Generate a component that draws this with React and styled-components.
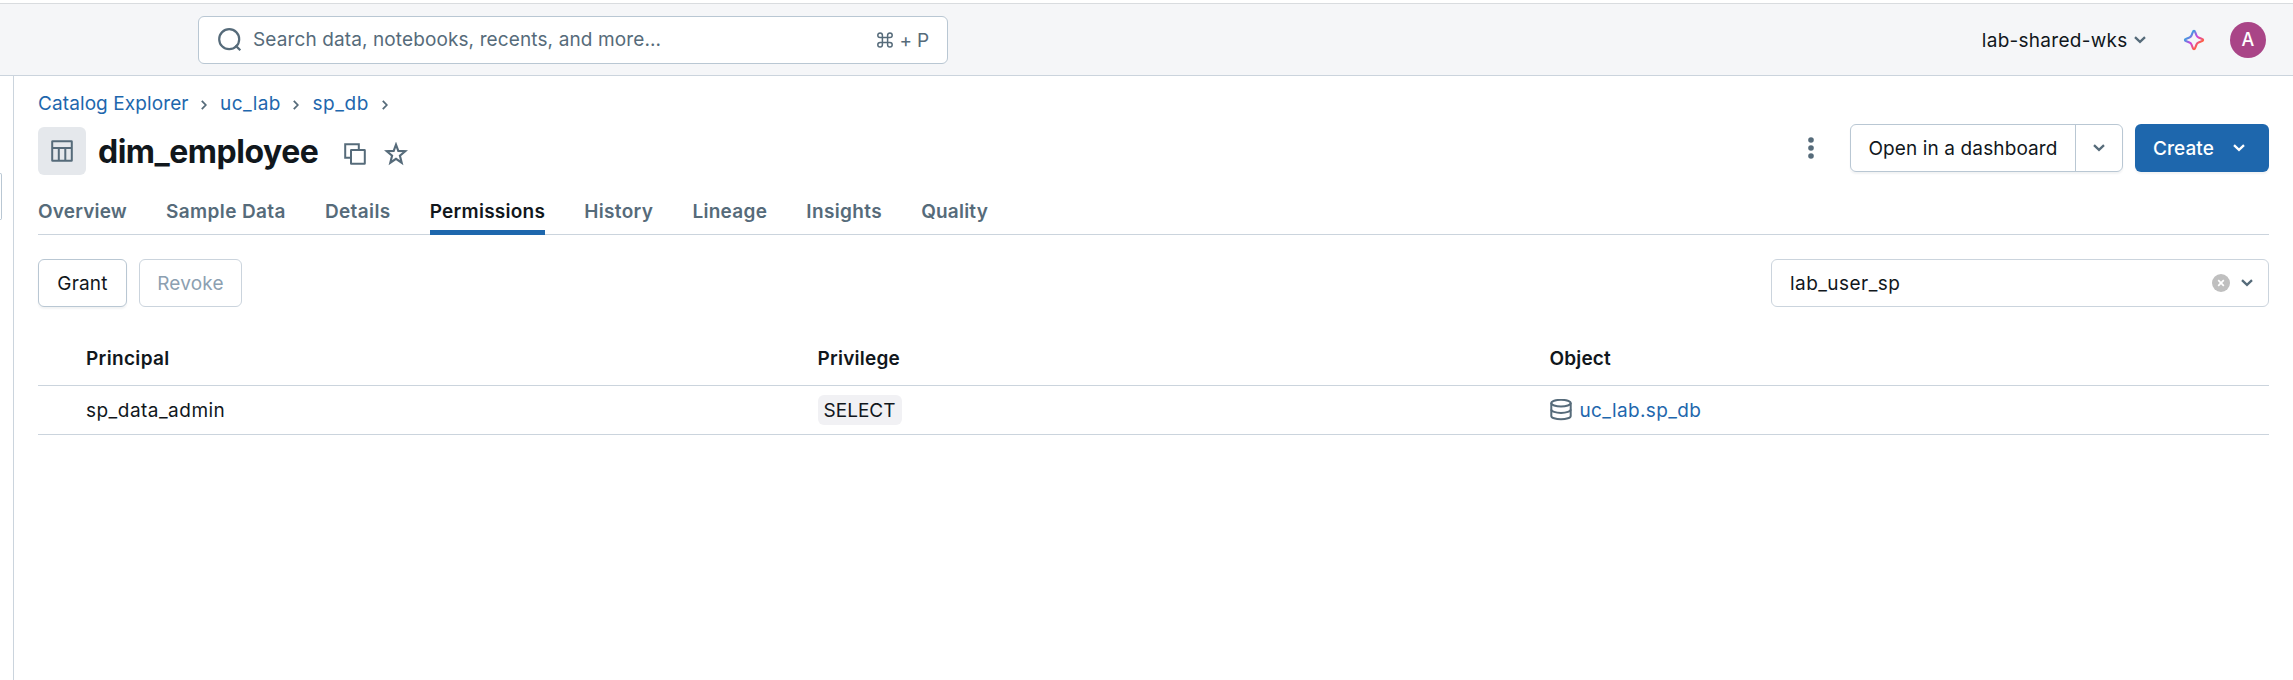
import React from "react";
import styled, { createGlobalStyle } from "styled-components";

const slate = "#566b7a";
const ink = "#11171c";
const blue = "#1e67ad";
const line = "#cbd4dd";
const border = "#b9c7d3";

const GlobalStyle = createGlobalStyle`
  *, *::before, *::after { box-sizing: border-box; }
  html, body, #root { height: 100%; }
  body {
    margin: 0;
    background: #fff;
    color: ${ink};
    font: 400 19px/30px Inter, "Liberation Sans", sans-serif;
    overflow: hidden;
  }
  button { font: inherit; color: inherit; margin: 0; padding: 0; cursor: pointer; }
  svg { display: block; flex: none; }
`;

const Page = styled.div`
  display: flex;
  flex-direction: column;
  height: 100%;
  padding-top: 3px;
`;

const TopBar = styled.header`
  display: flex;
  align-items: center;
  height: 73px;
  flex: none;
  padding: 0 27px 0 198px;
  background: #f5f6f8;
  border-top: 1px solid #d9dcdf;
  border-bottom: 1px solid ${line};
`;

const Label = styled.span`
  display: inline-block;
  padding-top: 2px;
  letter-spacing: ${(p) => p.$track || 0}px;
  white-space: nowrap;
`;

const SearchBox = styled.div`
  display: flex;
  align-items: center;
  width: 750px;
  height: 48px;
  padding: 0 18px 0 19px;
  background: #fff;
  border: 1px solid ${border};
  border-radius: 6px;
  color: ${slate};
`;

const SearchHint = styled(Label)`
  flex: 1;
  margin: 0 0 2px 11px;
`;

const Shortcut = styled.span`
  display: flex;
  align-items: center;
  gap: 7px;
`;

const Workspace = styled.button`
  display: flex;
  align-items: center;
  gap: 6.5px;
  margin-left: auto;
  border: 0;
  background: none;
`;

const AssistantButton = styled.button`
  margin: 0 25px 0 37px;
  border: 0;
  background: none;
`;

const Avatar = styled.div`
  display: grid;
  place-items: center;
  width: 36px;
  height: 36px;
  border-radius: 50%;
  background: #a94587;
  color: #fff;
  font-size: 18px;
  font-weight: 500;
`;

const Body = styled.div`
  display: flex;
  flex: 1;
`;

const Rail = styled.aside`
  width: 14px;
  flex: none;
  padding-top: 97px;
  border-right: 1px solid ${line};
`;

const RailHandle = styled.div`
  width: 2px;
  height: 47px;
  border: 1px solid ${border};
  border-left: 0;
  border-radius: 0 5px 5px 0;
`;

const Main = styled.main`
  flex: 1;
  padding: 12px 24px 0;
`;

const Breadcrumbs = styled.nav`
  display: flex;
  align-items: center;
  height: 30px;
  color: ${blue};
`;

const Separator = styled.span`
  padding: 3px 13px 0 12.5px;
`;

const TitleRow = styled.div`
  display: flex;
  align-items: center;
  height: 54px;
  margin-top: 6px;
`;

const TypeBadge = styled.div`
  display: grid;
  place-items: center;
  width: 48px;
  height: 48px;
  border-radius: 6px;
  background: #e5e8ec;
`;

const Title = styled.h1`
  margin: 0 25.5px 0 12px;
  padding-top: 1px;
  font-size: 32px;
  line-height: 42px;
  font-weight: 650;
  letter-spacing: -0.5px;
`;

const TitleTools = styled.div`
  display: flex;
  align-items: center;
  gap: 18.5px;
  padding-top: 5px;
`;

const Actions = styled.div`
  display: flex;
  align-items: center;
  margin: -6px 0 0 auto;
`;

const SplitButton = styled.div`
  display: flex;
  width: 273px;
  height: 48px;
  margin: 0 12px 0 36px;
  border: 1px solid ${border};
  border-radius: 6px;
  box-shadow: 0 2px 2px rgba(27, 49, 68, 0.06);
`;

const SplitMain = styled.button`
  flex: 1;
  border: 0;
  border-right: 1px solid ${border};
  background: none;
`;

const SplitToggle = styled.button`
  display: grid;
  place-items: center;
  width: 46px;
  border: 0;
  background: none;
`;

const CreateButton = styled.button`
  display: flex;
  align-items: center;
  gap: 19px;
  width: 134px;
  height: 48px;
  padding: 0 0 0 18px;
  border: 0;
  border-radius: 6px;
  background: ${blue};
  color: #fff;
  font-weight: 500;
  box-shadow: 0 2px 2px rgba(27, 49, 68, 0.06);
`;

const Tabs = styled.nav`
  display: flex;
  gap: 39.1px;
  height: 57px;
  border-bottom: 1px solid ${line};
`;

const Tab = styled.a`
  height: 57px;
  padding-top: 19px;
  border-bottom: 5px solid ${(p) => (p.$active ? blue : "transparent")};
  color: ${(p) => (p.$active ? ink : slate)};
  font-weight: 600;
  letter-spacing: ${(p) => p.$track}px;
  white-space: nowrap;
`;

const Toolbar = styled.div`
  display: flex;
  gap: 12px;
  margin-top: 24px;
`;

const Button = styled.button`
  width: ${(p) => p.$width}px;
  height: 48px;
  padding-top: 1px;
  border: 1px solid ${(p) => (p.disabled ? line : border)};
  border-radius: 6px;
  background: #fff;
  color: ${(p) => (p.disabled ? "#8ca0b1" : ink)};
  letter-spacing: 0.19px;
  box-shadow: ${(p) => (p.disabled ? "none" : "0 2px 2px rgba(27, 49, 68, 0.06)")};
`;

const Select = styled.div`
  display: flex;
  align-items: center;
  width: 498px;
  height: 48px;
  margin-left: auto;
  padding: 0 15px 0 18px;
  border: 1px solid ${line};
  border-radius: 6px;
`;

const SelectValue = styled(Label)`
  flex: 1;
`;

const Clear = styled.span`
  margin: 0 11px 0 0;
`;

const Table = styled.div`
  margin-top: 24px;
`;

const Row = styled.div`
  display: grid;
  grid-template-columns: 731.5px 732px 1fr;
  align-items: center;
  height: ${(p) => (p.$head ? 55 : 49)}px;
  padding-left: 48px;
  border-bottom: 1px solid ${line};
  font-weight: ${(p) => (p.$head ? 600 : 400)};
`;

const Tag = styled.span`
  display: block;
  width: 84px;
  height: 30px;
  padding: 1px 0 0 6px;
  border-radius: 6px;
  background: #f1f1f4;
  letter-spacing: 0.02px;
`;

const ObjectLink = styled.a`
  display: flex;
  align-items: center;
  gap: 8px;
  color: ${blue};
`;

function ChevronDown({ color = slate }) {
  return (
    <svg width="12" height="8" viewBox="0 0 12 8" fill="none" stroke={color} strokeWidth="2.3">
      <path d="M1 1.1 6 5.9l5-4.8" />
    </svg>
  );
}

function ChevronRight() {
  return (
    <svg width="6" height="10" viewBox="0 0 6 10" fill="none" stroke={slate} strokeWidth="1.8">
      <path d="M.8.8 4.8 5 .8 9.2" />
    </svg>
  );
}

function SearchIcon() {
  return (
    <svg width="24" height="24" viewBox="0 0 24 24" fill="none" stroke={slate} strokeWidth="2.2">
      <circle cx="11.2" cy="11.2" r="10" />
      <path d="m17.4 17.4 4.900 4.900" />
    </svg>
  );
}

function CommandIcon() {
  return (
    <svg width="16" height="16" viewBox="0 0 16 16" fill="none" stroke={slate} strokeWidth="1.5">
      <path d="M5.4 3.2v9.6a2.3 2.3 0 1 1-2.3-2.3h9.8a2.3 2.3 0 1 1-2.3 2.3V3.2a2.3 2.3 0 1 1 2.3 2.3H3.1a2.3 2.3 0 1 1 2.3-2.3Z" />
    </svg>
  );
}

function SparkleIcon() {
  return (
    <svg width="22" height="22" viewBox="0 0 22 22" fill="none">
      <defs>
        <linearGradient id="spark" x1="3" y1="3" x2="19" y2="19" gradientUnits="userSpaceOnUse">
          <stop offset="0.2" stopColor="#4299e0" />
          <stop offset="0.48" stopColor="#ca42e0" />
          <stop offset="0.8" stopColor="#ff5f46" />
        </linearGradient>
      </defs>
      <path
        d="M9.9 2.8c.4-1.2 1.8-1.2 2.2 0l1.4 3.7c.4 1 1 1.6 2 2l3.7 1.4c1.2.4 1.2 1.8 0 2.2l-3.7 1.4c-1 .4-1.6 1-2 2l-1.4 3.7c-.4 1.2-1.8 1.2-2.2 0l-1.4-3.7c-.4-1-1-1.6-2-2l-3.7-1.4c-1.2-.4-1.2-1.8 0-2.2l3.7-1.4c1-.4 1.6-1 2-2Z"
        stroke="url(#spark)"
        strokeWidth="2.1"
      />
    </svg>
  );
}

function TableIcon() {
  return (
    <svg width="22" height="22" viewBox="0 0 22 22" fill="none" stroke={slate} strokeWidth="2">
      <rect x="1.2" y="1.2" width="19.6" height="19.6" rx=".4" />
      <path d="M1 8h20M7.8 8v13M14.3 8v13" />
    </svg>
  );
}

function CopyIcon() {
  return (
    <svg width="22" height="22" viewBox="0 0 22 22" fill="none" stroke={slate} strokeWidth="2">
      <path d="M6.5 14.8H1.2V1.2h13.6v5.3" />
      <rect x="7" y="7" width="13.8" height="13.8" rx=".3" />
    </svg>
  );
}

function StarIcon() {
  return (
    <svg width="24" height="24" viewBox="0 0 24 24" fill="none" stroke={slate} strokeWidth="2.1">
      <path d="m12 2.6 2.3 6.3 7 .3-5.4 4.4 1.8 7.1-5.7-3.9-5.7 3.9 1.8-7.1L2.7 9.2l7-.3Z" />
    </svg>
  );
}

function KebabIcon() {
  return (
    <svg width="6" height="22" viewBox="0 0 6 22" fill={slate}>
      <circle cx="3" cy="3" r="2.8" />
      <circle cx="3" cy="11" r="2.8" />
      <circle cx="3" cy="19" r="2.8" />
    </svg>
  );
}

function ClearIcon() {
  return (
    <svg width="18" height="18" viewBox="0 0 18 18">
      <circle cx="9" cy="9" r="9" fill="#bfbfbf" />
      <path d="m6.2 6.2 5.6 5.6m0-5.6-5.6 5.6" stroke="#fff" strokeWidth="1.7" />
    </svg>
  );
}

function DatabaseIcon() {
  return (
    <svg width="22" height="22" viewBox="0 0 22 22" fill="none" stroke={slate} strokeWidth="2">
      <ellipse cx="11" cy="4.1" rx="9.7" ry="3.3" />
      <path d="M1.3 4.100v12.800c0 1.900 4.300 3.400 9.700 3.400s9.700-1.500 9.700-3.400V4.100" />
      <path d="M1.3 10.500c0 1.900 4.300 3.400 9.700 3.400s9.700-1.500 9.700-3.400" />
    </svg>
  );
}

const crumbs = [
  ["Catalog Explorer", 0.1],
  ["uc_lab", 0.42],
  ["sp_db", 0.6],
];

const tabs = [
  ["Overview", 0.18],
  ["Sample Data", 0.38],
  ["Details", 0.38],
  ["Permissions", 0.26],
  ["History", 0.33],
  ["Lineage", 0.3],
  ["Insights", 0.36],
  ["Quality", 0.2],
];

export default function App() {
  return (
    <Page>
      <GlobalStyle />
      <TopBar>
        <SearchBox>
          <SearchIcon />
          <SearchHint $track={0.115}>Search data, notebooks, recents, and more...</SearchHint>
          <Shortcut>
            <CommandIcon />
            <Label $track={-0.2}>+ P</Label>
          </Shortcut>
        </SearchBox>
        <Workspace>
          <Label $track={0.27}>lab-shared-wks</Label>
          <ChevronDown />
        </Workspace>
        <AssistantButton aria-label="Assistant">
          <SparkleIcon />
        </AssistantButton>
        <Avatar>A</Avatar>
      </TopBar>
      <Body>
        <Rail>
          <RailHandle />
        </Rail>
        <Main>
          <Breadcrumbs>
            {crumbs.map(([name, track]) => (
              <React.Fragment key={name}>
                <Label $track={track}>{name}</Label>
                <Separator>
                  <ChevronRight />
                </Separator>
              </React.Fragment>
            ))}
          </Breadcrumbs>
          <TitleRow>
            <TypeBadge>
              <TableIcon />
            </TypeBadge>
            <Title>dim_employee</Title>
            <TitleTools>
              <CopyIcon />
              <StarIcon />
            </TitleTools>
            <Actions>
              <KebabIcon />
              <SplitButton>
                <SplitMain>
                  <Label $track={0.12}>Open in a dashboard</Label>
                </SplitMain>
                <SplitToggle aria-label="More options">
                  <ChevronDown />
                </SplitToggle>
              </SplitButton>
              <CreateButton>
                <Label $track={0.07}>Create</Label>
                <ChevronDown color="#fff" />
              </CreateButton>
            </Actions>
          </TitleRow>
          <Tabs>
            {tabs.map(([name, track]) => (
              <Tab key={name} $track={track} $active={name === "Permissions"}>
                {name}
              </Tab>
            ))}
          </Tabs>
          <Toolbar>
            <Button $width={89}>Grant</Button>
            <Button $width={103} disabled>
              Revoke
            </Button>
            <Select>
              <SelectValue $track={0.45}>lab_user_sp</SelectValue>
              <Clear>
                <ClearIcon />
              </Clear>
              <ChevronDown />
            </Select>
          </Toolbar>
          <Table>
            <Row $head>
              <Label $track={0.34}>Principal</Label>
              <Label $track={0.23}>Privilege</Label>
              <Label $track={0.15}>Object</Label>
            </Row>
            <Row>
              <Label $track={0.48}>sp_data_admin</Label>
              <div>
                <Tag>SELECT</Tag>
              </div>
              <ObjectLink>
                <DatabaseIcon />
                <Label $track={0.36}>uc_lab.sp_db</Label>
              </ObjectLink>
            </Row>
          </Table>
        </Main>
      </Body>
    </Page>
  );
}
